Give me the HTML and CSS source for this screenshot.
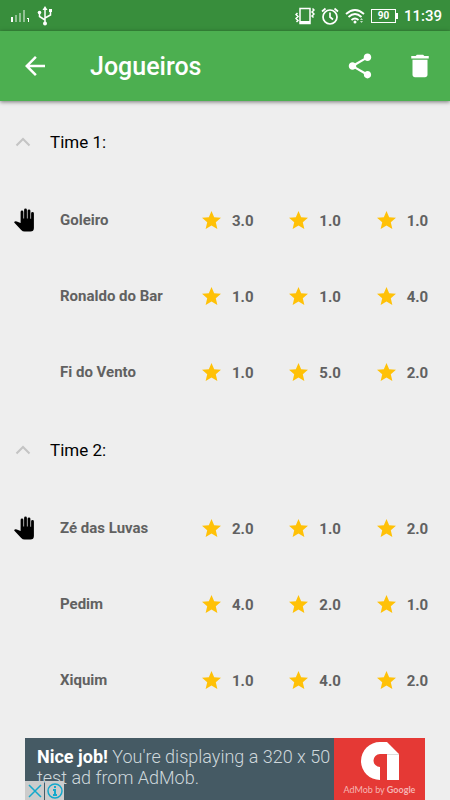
FILE: index.html
```
<!DOCTYPE html>
<html lang="pt-BR">
<head>
    <meta charset="UTF-8">
    <meta name="viewport" content="width=device-width, initial-scale=1.0">
    <title>Jogueiros</title>
    <link rel="stylesheet" href="styles.css">
</head>
<body>
    <svg class="symbols" aria-hidden="true">
        <symbol id="star" viewBox="2 2 20 19">
            <path d="M12 17.27 18.18 21l-1.64-7.03L22 9.24l-7.19-.61L12 2 9.19 8.63 2 9.24l5.46 4.73L5.82 21z"/>
        </symbol>
        <symbol id="hand" viewBox="0 0 22 24">
            <path d="M6.6 15V4a1.400 1.400 0 0 1 2.800 0v6.500h.7V2a1.400 1.400 0 0 1 2.800 0v8.500h.7V2.800a1.400 1.400 0 0 1 2.800 0v8h.7V5.400a1.400 1.400 0 0 1 2.800 0V20a3.500 3.500 0 0 1-3.500 3.500h-5.800q-2 0-3.400-1.500L.4 14.800q-.5-.7.300-1.300.9-.6 2.100-.1z"/>
        </symbol>
        <symbol id="chevron" viewBox="0 0 16 10">
            <path d="M1.500 8.500 8 2l6.500 6.500" fill="none" stroke="currentColor" stroke-width="2"/>
        </symbol>
    </svg>

    <div class="status-bar">
        <svg class="signal" width="20" height="14" viewBox="0 0 20 14" fill="#fff">
            <path d="M0 8h2v5H0z"/>
            <path d="M4 6h2v7H4zM8 4h2v9H8zM12 1h2v12h-2z" opacity=".45"/>
            <path d="M16 9h2v4h-1v-3h-1z"/>
        </svg>
        <svg class="usb" width="16" height="20" viewBox="0 0 16 20" fill="none" stroke="#fff" stroke-width="1.500">
            <path d="M8 3v14M2.500 7v3.500L8 14M13.500 5v4L8 12"/>
            <path d="M8 0l2.500 4h-5zM12 3h3v3h-3z" fill="#fff" stroke="none"/>
            <circle cx="2.500" cy="6.500" r="1.800" fill="#fff" stroke="none"/>
            <circle cx="8" cy="17.500" r="2" fill="#fff" stroke="none"/>
        </svg>
        <div class="status-right">
            <svg width="20" height="18" viewBox="0 0 20 18" fill="none" stroke="#fff" stroke-width="1.500">
                <path d="M5 1.500h10v15H5z"/>
                <path d="M5 15h10" stroke-width="2"/>
                <path d="M2.500 6 1 7.500l2 2-2 2 2 2L1.500 15M17.500 1.500l1.500 1.500-2 2 2 2-2 2 1.500 1.500"/>
            </svg>
            <svg width="18" height="18" viewBox="0 0 18 18" fill="none" stroke="#fff" stroke-width="1.700">
                <circle cx="9" cy="10" r="7"/>
                <path d="M9 5.500V10l3 2.500M1 4.500 4.500 1.500M17 4.500l-3.500-3"/>
            </svg>
            <svg width="20" height="16" viewBox="0 0 20 16" fill="none" stroke="#fff" stroke-width="1.800">
                <path d="M1 6q9-8 18 0M3.500 9q6.500-6 13 0M6.500 12q3.500-3 7 0"/>
                <circle cx="10" cy="14" r="1.500" fill="#fff" stroke="none"/>
                <path d="m15 12 1.500-2 1.500 2zM15 13l1.500 2 1.500-2z" fill="#fff" stroke="none" opacity=".7"/>
            </svg>
            <span class="battery">90</span>
            <span class="clock">11:39</span>
        </div>
    </div>

    <header class="toolbar">
        <button class="icon-btn" aria-label="Voltar">
            <svg width="30" height="30" viewBox="0 0 24 24"><path d="M20 11H7.830l5.590-5.590L12 4l-8 8 8 8 1.410-1.410L7.830 13H20z"/></svg>
        </button>
        <h1>Jogueiros</h1>
        <button class="icon-btn" aria-label="Compartilhar">
            <svg width="30" height="30" viewBox="0 0 24 24"><path d="M18 16.080c-.76 0-1.440.3-1.960.770L8.910 12.700c.05-.23.09-.46.09-.7s-.04-.47-.09-.7l7.050-4.110c.54.5 1.250.81 2.040.81 1.660 0 3-1.340 3-3s-1.340-3-3-3-3 1.340-3 3c0 .24.04.47.09.7L8.040 9.810C7.500 9.310 6.790 9 6 9c-1.660 0-3 1.340-3 3s1.340 3 3 3c.79 0 1.500-.31 2.040-.81l7.120 4.160c-.05.21-.08.43-.08.65 0 1.610 1.310 2.920 2.920 2.920s2.920-1.310 2.920-2.920-1.310-2.920-2.920-2.920z"/></svg>
        </button>
        <button class="icon-btn" aria-label="Excluir">
            <svg width="30" height="30" viewBox="0 0 24 24"><path d="M6 19c0 1.100.9 2 2 2h8c1.100 0 2-.9 2-2V7H6v12zM19 4h-3.500l-1-1h-5l-1 1H5v2h14V4z"/></svg>
        </button>
    </header>

    <main class="teams">
        <section>
            <h2><button class="team-header"><svg class="chevron"><use href="#chevron"/></svg>Time 1:</button></h2>
            <table class="players">
                <tr>
                    <th scope="row"><svg class="hand"><use href="#hand"/></svg>Goleiro</th>
                    <td><svg class="star"><use href="#star"/></svg>3.0</td>
                    <td><svg class="star"><use href="#star"/></svg>1.0</td>
                    <td><svg class="star"><use href="#star"/></svg>1.0</td>
                </tr>
                <tr>
                    <th scope="row">Ronaldo do Bar</th>
                    <td><svg class="star"><use href="#star"/></svg>1.0</td>
                    <td><svg class="star"><use href="#star"/></svg>1.0</td>
                    <td><svg class="star"><use href="#star"/></svg>4.0</td>
                </tr>
                <tr>
                    <th scope="row">Fi do Vento</th>
                    <td><svg class="star"><use href="#star"/></svg>1.0</td>
                    <td><svg class="star"><use href="#star"/></svg>5.0</td>
                    <td><svg class="star"><use href="#star"/></svg>2.0</td>
                </tr>
            </table>
        </section>

        <section>
            <h2><button class="team-header"><svg class="chevron"><use href="#chevron"/></svg>Time 2:</button></h2>
            <table class="players">
                <tr>
                    <th scope="row"><svg class="hand"><use href="#hand"/></svg>Zé das Luvas</th>
                    <td><svg class="star"><use href="#star"/></svg>2.0</td>
                    <td><svg class="star"><use href="#star"/></svg>1.0</td>
                    <td><svg class="star"><use href="#star"/></svg>2.0</td>
                </tr>
                <tr>
                    <th scope="row">Pedim</th>
                    <td><svg class="star"><use href="#star"/></svg>4.0</td>
                    <td><svg class="star"><use href="#star"/></svg>2.0</td>
                    <td><svg class="star"><use href="#star"/></svg>1.0</td>
                </tr>
                <tr>
                    <th scope="row">Xiquim</th>
                    <td><svg class="star"><use href="#star"/></svg>1.0</td>
                    <td><svg class="star"><use href="#star"/></svg>4.0</td>
                    <td><svg class="star"><use href="#star"/></svg>2.0</td>
                </tr>
            </table>
        </section>
    </main>

    <!-- banner -->
    <aside class="ad">
        <p class="ad-text"><strong>Nice job!</strong> You're displaying a 320 x 50 test ad from AdMob.</p>
        <div class="ad-brand">
            <svg width="38" height="38" viewBox="0 0 38 38">
                <path d="M26 0 38 12v26H26V12h-7a6.500 6.500 0 0 0 0 13v13A19 19 0 0 1 19 0z" fill="#fff"/>
                <path d="M26 12h12v1H26z" fill="#ddd"/>
            </svg>
            <span>AdMob by <b>Google</b></span>
        </div>
        <div class="ad-controls">
            <button aria-label="Fechar">
                <svg width="14" height="14" viewBox="0 0 14 14"><path d="m1 1 12 12M13 1 1 13"/></svg>
            </button>
            <button aria-label="Informações">
                <svg width="16" height="16" viewBox="0 0 16 16"><circle cx="8" cy="8" r="7"/><path d="M8 3v2M6 7h2v5M6 12h4" stroke-width="2"/></svg>
            </button>
        </div>
    </aside>
</body>
</html>
```
FILE: styles.css
```
* {
    box-sizing: border-box;
}
body {
    margin: 0;
    min-height: 100vh;
    display: flex;
    flex-direction: column;
    background-color: #eeeeee;
    font-family: Roboto, sans-serif;
}
button {
    border: none;
    padding: 0;
    background: none;
    font-family: inherit;
    cursor: pointer;
}
svg {
    flex-shrink: 0;
}
.symbols {
    position: absolute;
    width: 0;
    height: 0;
}

.status-bar {
    height: 31px;
    padding: 0 8px 0 11px;
    display: flex;
    align-items: center;
    gap: 6px;
    background-color: #388e3c;
    color: #fff;
}
.status-right {
    margin-left: auto;
    display: flex;
    align-items: center;
    gap: 6px;
}
.battery {
    position: relative;
    width: 25px;
    height: 14px;
    border: 1px solid #fff;
    font-size: 10px;
    font-weight: bold;
    line-height: 12px;
    text-align: center;
}
.battery::after {
    content: "";
    position: absolute;
    right: -3px;
    top: 3px;
    width: 2px;
    height: 6px;
    background-color: #fff;
}
.clock {
    margin-left: 2px;
    font-size: 15px;
    font-weight: 500;
}

.toolbar {
    position: relative;
    height: 70px;
    padding: 0 15px 0 20px;
    display: flex;
    align-items: center;
    gap: 30px;
    background-color: #4caf50;
    box-shadow: 0 1px 4px rgba(0, 0, 0, 0.5);
}
.toolbar h1 {
    flex: 1;
    margin: 0 0 0 10px;
    color: #fff;
    font-size: 25px;
    font-weight: 500;
}
.icon-btn svg {
    display: block;
    fill: #fff;
}

.teams {
    padding: 1px 0 20px;
}
.teams h2 {
    margin: 0;
    font-weight: normal;
}
.team-header {
    width: 100%;
    height: 80px;
    padding: 0 15px;
    display: flex;
    align-items: center;
    gap: 19px;
    color: #000;
    font-size: 17px;
    text-align: left;
}
.chevron {
    width: 16px;
    height: 10px;
    color: #c4c4c4;
}
.players {
    width: 100%;
    table-layout: fixed;
    border-collapse: collapse;
    color: #616161;
    font-size: 15px;
    font-weight: bold;
}
.players tr {
    height: 76px;
}
.players th {
    position: relative;
    width: 188px;
    padding: 0 0 0 60px;
    text-align: left;
}
.players td {
    padding: 0 0 0 14px;
    white-space: nowrap;
}
.hand {
    position: absolute;
    left: 14px;
    top: 26px;
    width: 22px;
    height: 24px;
}
.star {
    width: 19px;
    height: 18px;
    margin-right: 11px;
    vertical-align: -3px;
    fill: #ffc107;
}

.ad {
    position: relative;
    height: 62px;
    margin: auto 25px 0;
    display: flex;
    background-color: #455a64;
}
.ad-text {
    flex: 1;
    margin: 0;
    padding: 8px 0 0 12px;
    color: #cfd8dc;
    font-size: 18px;
    font-weight: 300;
    line-height: 21px;
}
.ad-text strong {
    color: #fff;
    font-weight: bold;
}
.ad-brand {
    width: 91px;
    padding-top: 4px;
    display: flex;
    flex-direction: column;
    align-items: center;
    gap: 4px;
    background-color: #e53935;
    color: #f5b5b3;
    font-family: Lato, sans-serif;
    font-size: 9px;
    line-height: 12px;
}
.ad-controls {
    position: absolute;
    left: 0;
    bottom: 0;
    display: flex;
    gap: 1px;
}
.ad-controls button {
    width: 19px;
    height: 19px;
    display: flex;
    align-items: center;
    justify-content: center;
    background-color: #cccccc;
}
.ad-controls svg {
    fill: none;
    stroke: #14a9cc;
    stroke-width: 1.5;
}
```
